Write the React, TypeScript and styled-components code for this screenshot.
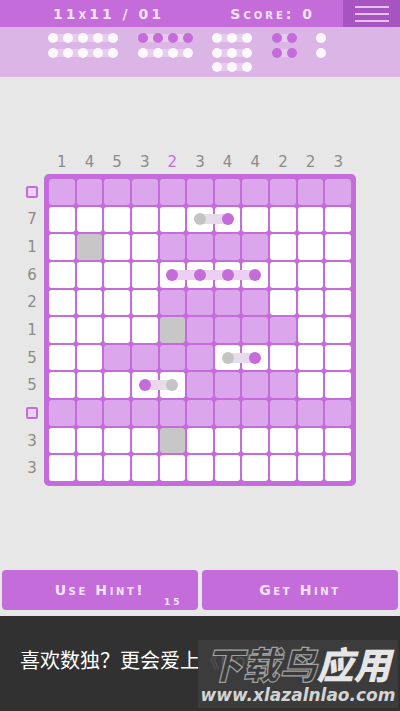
import styled, { createGlobalStyle } from "styled-components";

const colors = {
  purple: "#c46cda",
  purpleDark: "#a754c1",
  purpleLight: "#dba6eb",
  band: "#dbb5e6",
  page: "#e7e7e7",
  text: "#f4e3f8",
  clue: "#8b8b8b",
  gray: "#c7c7c7",
  banner: "#313131",
};

const GlobalStyle = createGlobalStyle`
  body {
    margin: 0;
    background: ${colors.page};
    font-family: "DejaVu Sans", sans-serif;
  }
`;

const StyledApp = styled.div`
  display: flex;
  flex-direction: column;
  width: 400px;
  height: 711px;
  overflow: hidden;
  background: ${colors.page};
`;

const TopBar = styled.header`
  display: flex;
  height: 27px;
  background: ${colors.purple};
`;

const TopTitle = styled.div`
  flex: 1;
  display: flex;
  align-items: center;
  justify-content: space-between;
  padding: 0 28px 0 53px;
  color: ${colors.text};
  font: 600 14px "DejaVu Sans", sans-serif;
  font-variant: small-caps;
  letter-spacing: 3px;
`;

const MenuButton = styled.div`
  width: 57px;
  display: flex;
  flex-direction: column;
  align-items: center;
  justify-content: center;
  gap: 5px;
  background: ${colors.purpleDark};
`;

const MenuLine = styled.span`
  width: 34px;
  height: 2px;
  background: #e6c0f0;
`;

const HintBand = styled.div`
  display: flex;
  gap: 19.5px;
  height: 51px;
  box-sizing: border-box;
  padding: 6px 0 0 48px;
  background: ${colors.band};
  border-bottom: 1px solid #efe4f2;
`;

const HintGroup = styled.div`
  display: flex;
  flex-direction: column;
  gap: 4.7px;
`;

const HintRow = styled.div`
  position: relative;
  display: flex;
  gap: 5px;

  &::before {
    content: "";
    position: absolute;
    left: 4px;
    right: 4px;
    top: 1px;
    bottom: 1px;
    background: rgba(255, 255, 255, 0.3);
  }
`;

const HintDot = styled.span<{ $on?: boolean }>`
  position: relative;
  width: 10px;
  height: 10px;
  border-radius: 50%;
  background: ${(p) => (p.$on ? colors.purple : "#fbf7fc")};
`;

const Board = styled.div`
  display: grid;
  grid-template-columns: 44px 312px;
  grid-template-rows: 24px 312px;
  margin-top: 72px;
`;

const ColClues = styled.div`
  grid-column: 2;
  grid-row: 1;
  display: grid;
  grid-template-columns: repeat(11, 1fr);
  gap: 2px;
  padding: 0 5px;
  align-items: center;
`;

const Clue = styled.span<{ $active?: boolean }>`
  text-align: center;
  font: 15px "DejaVu Sans", sans-serif;
  color: ${(p) => (p.$active ? colors.purple : colors.clue)};
`;

const RowClues = styled.div`
  grid-column: 1;
  grid-row: 2;
  display: grid;
  grid-template-rows: repeat(11, 1fr);
  gap: 2px;
  padding: 5px 0 5px 20px;
  justify-items: center;
  align-items: center;
`;

const EmptyMark = styled.span`
  width: 8px;
  height: 8px;
  border: 2px solid ${colors.purple};
  border-radius: 2px;
  background: #ecd2f3;
`;

const Frame = styled.div`
  position: relative;
  grid-column: 2;
  grid-row: 2;
  display: grid;
  grid-template-columns: repeat(11, 1fr);
  grid-template-rows: repeat(11, 1fr);
  gap: 2px;
  padding: 5px;
  border-radius: 5px;
  background: ${colors.purple};
`;

const Cell = styled.div<{ $kind: string }>`
  display: flex;
  align-items: center;
  justify-content: center;
  border-radius: 3px;
  background: ${(p) =>
    p.$kind === "P" ? colors.purpleLight : p.$kind === "G" ? colors.gray : "#ffffff"};
`;

const Dot = styled.span<{ $gray?: boolean }>`
  position: relative;
  z-index: 2;
  width: 12px;
  height: 12px;
  border-radius: 50%;
  background: ${(p) => (p.$gray ? "#c4c4c4" : colors.purple)};
`;

const Link = styled.span`
  position: absolute;
  z-index: 1;
  height: 10px;
`;

const Buttons = styled.div`
  display: flex;
  gap: 4px;
  padding: 0 2px;
  margin-top: 84px;
`;

const HintButton = styled.div`
  position: relative;
  flex: 1;
  height: 40px;
  display: flex;
  align-items: center;
  justify-content: center;
  border-radius: 4px;
  background: ${colors.purple};
  color: ${colors.text};
  font: 600 14px "DejaVu Sans", sans-serif;
  font-variant: small-caps;
  letter-spacing: 2.6px;
`;

const HintCount = styled.span`
  position: absolute;
  left: 162px;
  bottom: 3px;
  font-size: 9px;
  letter-spacing: 3px;
`;

const Banner = styled.div`
  position: relative;
  flex: 1;
  margin-top: 6px;
  padding: 32px 0 0 20px;
  background: ${colors.banner};
  color: #ffffff;
  font: 20px/24px "Noto Sans CJK SC", sans-serif;
  white-space: nowrap;
`;

const Watermark = styled.div`
  position: absolute;
  right: 2px;
  top: 24px;
  width: 200px;
  height: 68px;
  display: flex;
  flex-direction: column;
  align-items: center;
  padding-top: 4px;
  box-sizing: border-box;
  background: rgba(62, 62, 62, 0.9);
`;

const WatermarkTitle = styled.div`
  font: italic 900 37px/38px "Noto Sans CJK SC", sans-serif;
  letter-spacing: 0;
  color: #3a3a3a;
  -webkit-text-stroke: 1.2px #a0a0a0;

  & b {
    color: #e6e6e6;
    -webkit-text-stroke: 0;
  }
`;

const WatermarkUrl = styled.div`
  margin-top: 3px;
  font: italic bold 17px/20px "DejaVu Sans", sans-serif;
  color: #d4d4d4;
`;

const grid = [
  "PPPPPPPPPPP",
  "WWWWWWWWWWW",
  "WGWWPPPPWWW",
  "WWWWWWWWWWW",
  "WWWWPPPPWWW",
  "WWWWGPPPPWW",
  "WWPPPPWWWWW",
  "WWWWWPPPPWW",
  "PPPPPPPPPPP",
  "WWWWGWWWWWW",
  "WWWWWWWWWWW",
];

// dots on the board: "p" purple, "g" gray
const dots: Record<string, "p" | "g"> = {
  "1-5": "g",
  "1-6": "p",
  "3-4": "p",
  "3-5": "p",
  "3-6": "p",
  "3-7": "p",
  "6-6": "g",
  "6-7": "p",
  "7-3": "p",
  "7-4": "g",
};

const GRAY_BAR = "#e4e4e4";
const PURPLE_BAR = "#ebd0f3";

const links = [
  { row: 1, from: 5, to: 6, left: GRAY_BAR, right: PURPLE_BAR },
  { row: 3, from: 4, to: 7, left: PURPLE_BAR, right: PURPLE_BAR },
  { row: 6, from: 6, to: 7, left: GRAY_BAR, right: PURPLE_BAR },
  { row: 7, from: 3, to: 4, left: PURPLE_BAR, right: GRAY_BAR },
];

const colClues = ["1", "4", "5", "3", "2", "3", "4", "4", "2", "2", "3"];
const rowClues = ["", "7", "1", "6", "2", "1", "5", "5", "", "3", "3"];

const hints: { count: number; rows: boolean[] }[] = [
  { count: 5, rows: [false, false] },
  { count: 4, rows: [true, false] },
  { count: 3, rows: [false, false, false] },
  { count: 2, rows: [true, true] },
  { count: 1, rows: [false, false] },
];

const PITCH = (312 - 10 + 2) / 11;
const CELL = PITCH - 2;

const App = () => {
  return (
    <StyledApp>
      <GlobalStyle />
      <TopBar>
        <TopTitle>
          <span>11x11 / 01</span>
          <span>Score: 0</span>
        </TopTitle>
        <MenuButton>
          <MenuLine />
          <MenuLine />
          <MenuLine />
        </MenuButton>
      </TopBar>

      <HintBand>
        {hints.map((group, gi) => (
          <HintGroup key={gi}>
            {group.rows.map((on, ri) => (
              <HintRow key={ri}>
                {Array.from({ length: group.count }).map((_, di) => (
                  <HintDot key={di} $on={on} />
                ))}
              </HintRow>
            ))}
          </HintGroup>
        ))}
      </HintBand>

      <Board>
        <ColClues>
          {colClues.map((c, i) => (
            <Clue key={i} $active={i === 4}>
              {c}
            </Clue>
          ))}
        </ColClues>
        <RowClues>
          {rowClues.map((c, i) =>
            c ? <Clue key={i}>{c}</Clue> : <EmptyMark key={i} />
          )}
        </RowClues>
        <Frame>
          {grid.map((row, r) =>
            row.split("").map((kind, c) => {
              const dot = dots[`${r}-${c}`];
              return (
                <Cell key={`${r}-${c}`} $kind={kind}>
                  {dot && <Dot $gray={dot === "g"} />}
                </Cell>
              );
            })
          )}
          {links.map((l) => (
            <Link
              key={l.row}
              style={{
                left: 5 + l.from * PITCH + CELL / 2,
                width: (l.to - l.from) * PITCH,
                top: 5 + l.row * PITCH + CELL / 2 - 5,
                background: `linear-gradient(to right, ${l.left}, ${l.right})`,
              }}
            />
          ))}
        </Frame>
      </Board>

      <Buttons>
        <HintButton>
          Use Hint!
          <HintCount>15</HintCount>
        </HintButton>
        <HintButton>Get Hint</HintButton>
      </Buttons>

      <Banner>
        喜欢数独？更会爱上《Dots》
        <Watermark>
          <WatermarkTitle>
            下载鸟<b>应用</b>
          </WatermarkTitle>
          <WatermarkUrl>www.xlazalnlao.com</WatermarkUrl>
        </Watermark>
      </Banner>
    </StyledApp>
  );
};

export default App;
